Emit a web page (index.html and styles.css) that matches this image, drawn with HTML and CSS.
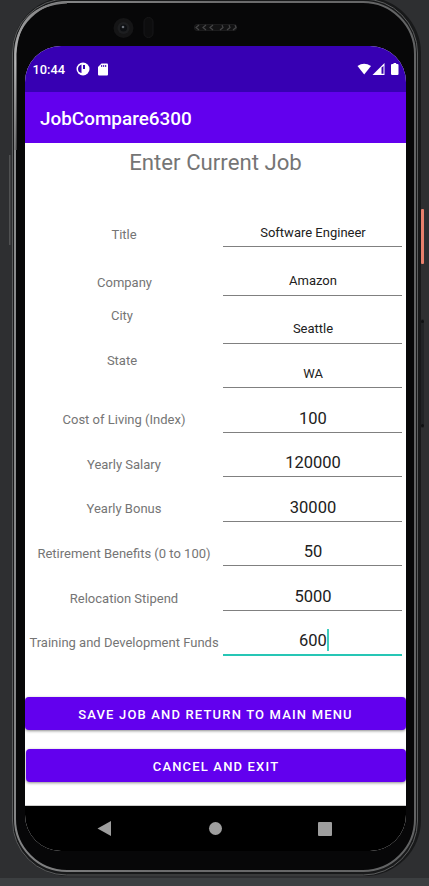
FILE: index.html
```html
<!DOCTYPE html>
<html lang="en">
<head>
<meta charset="utf-8">
<title>JobCompare6300</title>
<link rel="stylesheet" href="styles.css">
</head>
<body>
<svg class="device" viewBox="0 0 429 886" aria-hidden="true">
  <defs>
    <linearGradient id="rim" x1="0" y1="0" x2="1" y2="0.15">
      <stop offset="0" stop-color="#8c8d8e"/>
      <stop offset="0.5" stop-color="#6c6c6d"/>
      <stop offset="1" stop-color="#626364"/>
    </linearGradient>
    <linearGradient id="shine" gradientUnits="userSpaceOnUse" x1="17" y1="150" x2="75" y2="0">
      <stop offset="0" stop-color="#6c6c6d"/>
      <stop offset="0.5" stop-color="#b4b4b5"/>
      <stop offset="1" stop-color="#777778"/>
    </linearGradient>
  </defs>
  <rect width="429" height="886" fill="#2e2f31"/>
  <rect y="878" width="429" height="8" fill="#3c3f41"/>
  <rect x="9" y="155" width="1.500" height="90" fill="#505152"/>
  <rect x="421" y="209" width="3" height="55" rx="1" fill="#e8806c"/>
  <rect x="421" y="319" width="3" height="109" rx="1.500" fill="#222426"/>
  <circle cx="422.500" cy="321.500" r="1.500" fill="#101112"/>
  <circle cx="422.500" cy="425.500" r="1.500" fill="#101112"/>
  <rect x="12" y="-3" width="409" height="879" rx="56" fill="#18191a"/>
  <rect x="12.500" y="-1" width="405" height="876" rx="54" fill="none" stroke="#5b5c5d"/>
  <rect x="15" y="2" width="400" height="869" rx="52" fill="#070708" stroke="url(#rim)" stroke-width="2"/>
  <path d="M15.500 150V54Q18 5 67 2.500" fill="none" stroke="url(#shine)" stroke-width="2"/>
  <circle cx="123.500" cy="28" r="10" fill="#151516"/>
  <circle cx="123.500" cy="28" r="6" fill="#1d1e20"/>
  <circle cx="123.500" cy="28" r="3.500" fill="#0d0f12"/>
  <circle cx="123" cy="27" r="1.300" fill="#6b7077"/>
  <rect x="144" y="17.500" width="9" height="20" rx="4.500" fill="#0d0d0e" stroke="#171718"/>
  <rect x="194.500" y="24.500" width="42" height="6" rx="2.500" fill="#121213" stroke="#1c1c1d"/>
  <path d="M199 25L196 27.500L199 30M206 25L203 27.500L206 30M213 25L210 27.500L213 30M220 30L223 27.500L222 25M227 30L230 27.500L229 25M233 30L236 27.500L235 25" fill="none" stroke="#454546" stroke-width="1.200"/>
</svg>
<main class="screen">
  <header class="status">
    <span class="clock">10:44</span>
    <svg class="icon-app" viewBox="0 0 14 14"><circle cx="7" cy="7" r="6.500" fill="#fff"/><path d="M5.500 2.500V11Q2 10.500 2 7Q2 3.500 5.500 2.500ZM7 3H9V7H7Z" fill="#3700b3"/></svg>
    <svg class="icon-sd" viewBox="0 0 10 13"><path d="M3.500 0.500H9Q10 0.500 10 1.500V11.500Q10 12.500 9 12.500H1Q0 12.500 0 11.500V4Z" fill="#fff"/><path d="M3.700 2V4M5.700 2V4M7.700 2V4" stroke="#3700b3"/></svg>
    <svg class="icon-signal" viewBox="0 0 42 13"><path d="M0.500 3Q7 -1.500 14 3L7.200 11.500Z" fill="#fff"/><path d="M15.500 12L27.500 0V12Z" fill="#fff"/><path d="M24.500 4.500V10.800H26.500V3Z" fill="#3700b3"/><path d="M35.300 1H36.500V0H39.200V1H40.500Q41.500 1 41.500 2V11Q41.500 12 40.500 12H35.300Q34 12 34 11V2Q34 1 35.300 1Z" fill="#fff"/></svg>
  </header>
  <div class="appbar">JobCompare6300</div>
  <section class="content">
    <h1>Enter Current Job</h1>
    <form class="fields">
      <div class="row tall"><label>Title</label><span class="input text">Software Engineer</span></div>
      <div class="row tall"><label class="company">Company</label><span class="input text">Amazon</span></div>
      <div class="row tall"><label class="raised">City</label><span class="input text">Seattle</span></div>
      <div class="row"><label class="raised">State</label><span class="input text">WA</span></div>
      <div class="row"><label>Cost of Living (Index)</label><span class="input">100</span></div>
      <div class="row"><label>Yearly Salary</label><span class="input">120000</span></div>
      <div class="row"><label>Yearly Bonus</label><span class="input">30000</span></div>
      <div class="row"><label>Retirement Benefits (0 to 100)</label><span class="input">50</span></div>
      <div class="row"><label>Relocation Stipend</label><span class="input">5000</span></div>
      <div class="row"><label>Training and Development Funds</label><span class="input focused">600<i class="caret"></i></span></div>
    </form>
    <div class="actions">
      <button type="button">SAVE JOB AND RETURN TO MAIN MENU</button>
      <button type="button" class="cancel">CANCEL AND EXIT</button>
    </div>
  </section>
  <nav class="navbar">
    <svg viewBox="0 0 381 45"><path d="M72.500 22.500L86 15V30Z"/><circle cx="190.500" cy="22.500" r="6.500"/><rect x="293" y="16" width="14" height="14" rx="1"/></svg>
  </nav>
</main>
</body>
</html>
```
FILE: styles.css
```css
* { box-sizing: border-box; }
body {
  margin: 0;
  width: 429px;
  height: 886px;
  overflow: hidden;
  background: #2e2f31;
  font-family: Roboto, sans-serif;
}
.device { position: absolute; inset: 0; width: 429px; height: 886px; }
.screen {
  position: relative;
  width: 381px;
  height: 805px;
  margin: 46px 0 0 25px;
  display: flex;
  flex-direction: column;
  overflow: hidden;
  border-radius: 36px;
  background: #fff;
}
.status {
  flex: 0 0 45.5px;
  display: flex;
  align-items: center;
  padding: 1px 7px 0 7.5px;
  background: #3700b3;
  color: #fff;
}
.clock { width: 43px; font-size: 12.8px; font-weight: 500; }
.icon-app { width: 14px; height: 14px; }
.icon-sd { width: 10px; height: 13px; margin-left: 8.5px; }
.icon-signal { width: 42px; height: 13px; margin-left: auto; }
.appbar {
  flex: 0 0 51.5px;
  display: flex;
  align-items: center;
  padding: 2px 0 0 15px;
  background: #6200ee;
  color: #fff;
  font-size: 18.9px;
  font-weight: 500;
}
.content { flex: 1; display: flex; flex-direction: column; background: #fff; border-bottom: 1px solid #ccc; }
h1 {
  height: 40px;
  margin: 0 0 16px;
  line-height: 39px;
  text-align: center;
  color: #757575;
  font-size: 22.2px;
  font-weight: 400;
}
.row { display: grid; grid-template-columns: 198px 179px; height: 44.55px; }
.row.tall { height: 48.25px; }
label {
  align-self: end;
  height: 24.5px;
  line-height: 24px;
  text-align: center;
  white-space: nowrap;
  color: #757575;
  font-size: 13px;
}
.company { padding-left: 1px; }
.raised { margin-bottom: 15px; padding-right: 4px; }
.input {
  align-self: end;
  height: 28.3px;
  line-height: 28px;
  padding-left: 1px;
  border-bottom: 1px solid #808080;
  text-align: center;
  color: #212121;
  font-size: 16.5px;
}
.text { font-size: 13px; }
.focused { height: 29px; border-bottom: 2px solid #26c6b5; }
.caret { display: inline-block; width: 2px; height: 22px; margin-right: -2px; vertical-align: -5px; background: #3fcdbf; }
.actions { display: flex; flex-direction: column; gap: 19px; padding-top: 41px; }
button {
  height: 33px;
  padding: 2px 0 0;
  border: 0;
  border-radius: 4px;
  background: #6200ee;
  box-shadow: 0 1px 3px rgba(0, 0, 0, .45);
  color: #fff;
  font: 500 13px Roboto, sans-serif;
  letter-spacing: 1.17px;
}
.cancel { margin-left: 1px; }
.navbar { flex: 0 0 45px; background: #000; }
.navbar svg { display: block; width: 381px; height: 45px; fill: #9e9e9e; }
```
